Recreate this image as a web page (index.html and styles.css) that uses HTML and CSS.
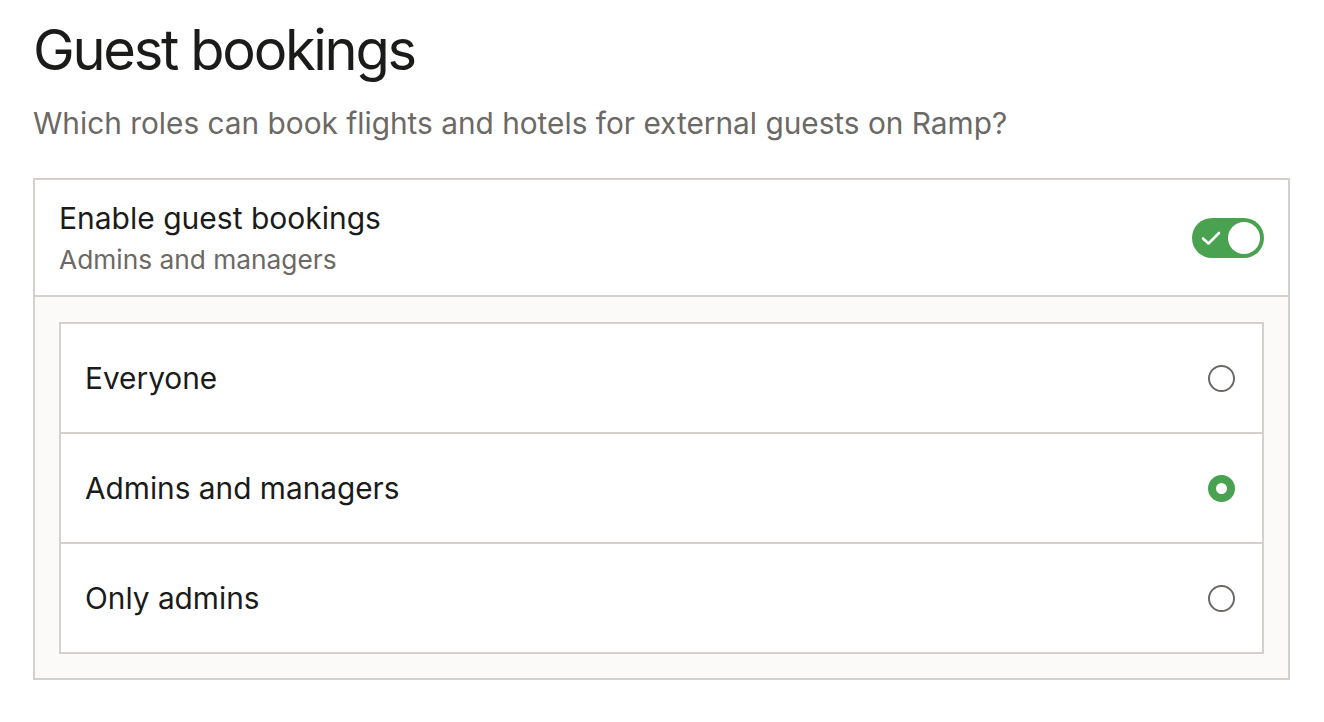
FILE: index.html
```html
<!DOCTYPE html>
<html>
<head>
<meta charset="utf-8">
<link rel="stylesheet" href="styles.css">
</head>
<body>
<div class="page">
  <h1 class="title">Guest bookings</h1>
  <p class="subtitle">Which roles can book flights and hotels for external guests on Ramp?</p>
  <div class="card">
    <div class="card-head">
      <div class="head-text">
        <div class="head-title">Enable guest bookings</div>
        <div class="head-sub">Admins and managers</div>
      </div>
      <div class="toggle">
        <svg class="check" width="20" height="16" viewBox="0 0 20 16"><path d="M2 8.5 L7.5 13.5 L18 3" fill="none" stroke="#fff" stroke-width="2.6" stroke-linecap="round" stroke-linejoin="round"/></svg>
        <span class="knob"></span>
      </div>
    </div>
    <div class="card-body">
      <div class="options">
        <div class="option"><span class="label">Everyone</span><span class="radio"></span></div>
        <div class="option"><span class="label">Admins and managers</span><span class="radio on"></span></div>
        <div class="option"><span class="label">Only admins</span><span class="radio"></span></div>
      </div>
    </div>
  </div>
</div>
</body>
</html>
```
FILE: styles.css
```css
html, body { margin: 0; padding: 0; background: #fff; }
body { font-family: Inter, "Noto Sans", sans-serif; color: #1b1b1a; }
.page { padding: 16px 34px 0 33px; }
.title { margin: 0; font-size: 56px; font-weight: 400; letter-spacing: -2.3px; line-height: 68px; }
.subtitle { margin: 21px 0 0; font-size: 29.8px; color: #6c6965; line-height: 36px; }
.card { margin-top: 37px; border: 2px solid #d4d1cc; }
.card-head { display: flex; align-items: center; justify-content: space-between; padding: 18px 24px 17px 24px; border-bottom: 2px solid #d4d1cc; }
.head-title { font-size: 30px; line-height: 40px; }
.head-sub { font-size: 26.3px; color: #6c6965; line-height: 36px; margin-top: 4px; }
.toggle { width: 72px; height: 40px; border-radius: 20px; background: #49a24f; display: flex; align-items: center; justify-content: space-between; padding: 0 4px 0 9px; box-sizing: border-box; }
.knob { width: 32px; height: 32px; border-radius: 50%; background: #fff; }
.card-body { background: #fbfaf8; padding: 25px 24px 24px; }
.options { border: 2px solid #d4d1cc; background: #fff; }
.option { display: flex; align-items: center; justify-content: space-between; height: 108px; padding: 0 27px 0 24px; border-top: 2px solid #d4d1cc; }
.option:first-child { border-top: none; }
.label { font-size: 29.8px; }
.radio { width: 23px; height: 23px; border-radius: 50%; border: 2px solid #6c6965; }
.radio.on { border: 8px solid #49a24f; width: 11px; height: 11px; }
```
